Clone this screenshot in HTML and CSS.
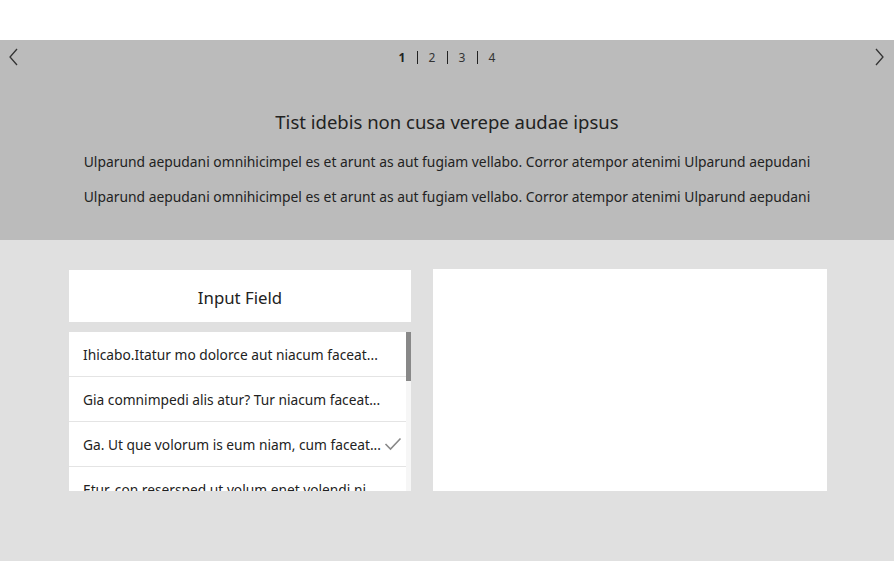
FILE: index.html
```html
<!DOCTYPE html>
<html>
<head>
<meta charset="utf-8">
<link rel="stylesheet" href="styles.css">
</head>
<body>
<div class="topbar"></div>
<section class="hero">
  <div class="nav">
    <button class="arrow"><svg width="12" height="20" viewBox="0 0 12 20"><path d="M9 2 L2 10 L9 18" fill="none" stroke="#333" stroke-width="1.3"/></svg></button>
    <div class="pager">
      <span class="pg active">1</span><span class="sep"></span>
      <span class="pg">2</span><span class="sep"></span>
      <span class="pg">3</span><span class="sep"></span>
      <span class="pg">4</span>
    </div>
    <button class="arrow"><svg width="12" height="20" viewBox="0 0 12 20"><path d="M3 2 L10 10 L3 18" fill="none" stroke="#333" stroke-width="1.3"/></svg></button>
  </div>
  <h1 class="title">Tist idebis non cusa verepe audae ipsus</h1>
  <p class="line">Ulparund aepudani omnihicimpel es et arunt as aut fugiam vellabo. Corror atempor atenimi Ulparund aepudani</p>
  <p class="line">Ulparund aepudani omnihicimpel es et arunt as aut fugiam vellabo. Corror atempor atenimi Ulparund aepudani</p>
</section>
<section class="content">
  <div class="left">
    <div class="field">Input Field</div>
    <div class="listbox">
      <ul class="list">
        <li class="item"><span class="txt">Ihicabo.Itatur mo dolorce aut niacum faceat...</span></li>
        <li class="item"><span class="txt">Gia comnimpedi alis atur? Tur niacum faceat...</span></li>
        <li class="item"><span class="txt">Ga. Ut que volorum is eum niam, cum faceat...</span><svg class="check" width="18" height="14" viewBox="0 0 18 14"><path d="M1.5 7 L6.5 12 L16.5 1.5" fill="none" stroke="#888" stroke-width="1.6"/></svg></li>
        <li class="item"><span class="txt">Etur, con resersped ut volum enet volendi ni</span></li>
      </ul>
      <div class="scrolltrack"><div class="thumb"></div></div>
    </div>
  </div>
  <div class="right"></div>
</section>
</body>
</html>
```
FILE: styles.css
```css
* { box-sizing: border-box; }
html, body { margin: 0; padding: 0; }
body {
  width: 894px;
  height: 561px;
  background: #e0e0e0;
  font-family: "Noto Sans", "Open Sans", sans-serif;
  color: #222;
  overflow: hidden;
}
.topbar { height: 40px; background: #fff; }
.hero {
  height: 200px;
  background: #bbbbbb;
  display: flex;
  flex-direction: column;
  align-items: center;
}
.nav {
  width: 100%;
  height: 34px;
  display: flex;
  align-items: center;
  justify-content: space-between;
  padding: 0 9px 0 8px;
}
.arrow {
  background: none;
  border: 0;
  padding: 0;
  width: 12px;
  height: 20px;
  display: flex;
}
.pager {
  display: flex;
  align-items: center;
  margin-top: 1px;
  margin-left: 1px;
}
.pg {
  font-size: 12px;
  width: 29px;
  text-align: center;
  color: #333;
}
.pg.active { font-weight: 700; color: #222; }
.sep { width: 1px; height: 13px; background: #222; }
.title {
  margin: 35px 0 0;
  font-size: 18.5px;
  font-weight: 400;
  line-height: 26px;
  color: #222;
}
.line {
  margin: 0;
  font-size: 13.85px;
  line-height: 35px;
  color: #222;
}
.title + .line { margin-top: 9px; }
.content {
  display: flex;
  padding: 29px 0 0 69px;
  gap: 22px;
}
.left { width: 342px; display: flex; flex-direction: column; gap: 10px; }
.field {
  margin-top: 1px;
  height: 52px;
  background: #fff;
  font-size: 16.8px;
  padding-top: 3px;
  display: flex;
  align-items: center;
  justify-content: center;
  color: #222;
}
.listbox {
  height: 159px;
  background: #fff;
  display: flex;
  overflow: hidden;
}
.list { list-style: none; margin: 0; padding: 0; flex: 1; min-width: 0; }
.item {
  height: 45px;
  border-bottom: 1px solid #e4e4e4;
  display: flex;
  align-items: center;
  padding: 0 0 0 14px;
  font-size: 13.75px;
  color: #222;
  white-space: nowrap;
}
.check { margin-left: 3px; flex: none; }
.scrolltrack { width: 5px; background: #f6f6f6; flex: none; }
.thumb { height: 49px; background: #888; }
.right { width: 394px; height: 222px; background: #fff; }
```
